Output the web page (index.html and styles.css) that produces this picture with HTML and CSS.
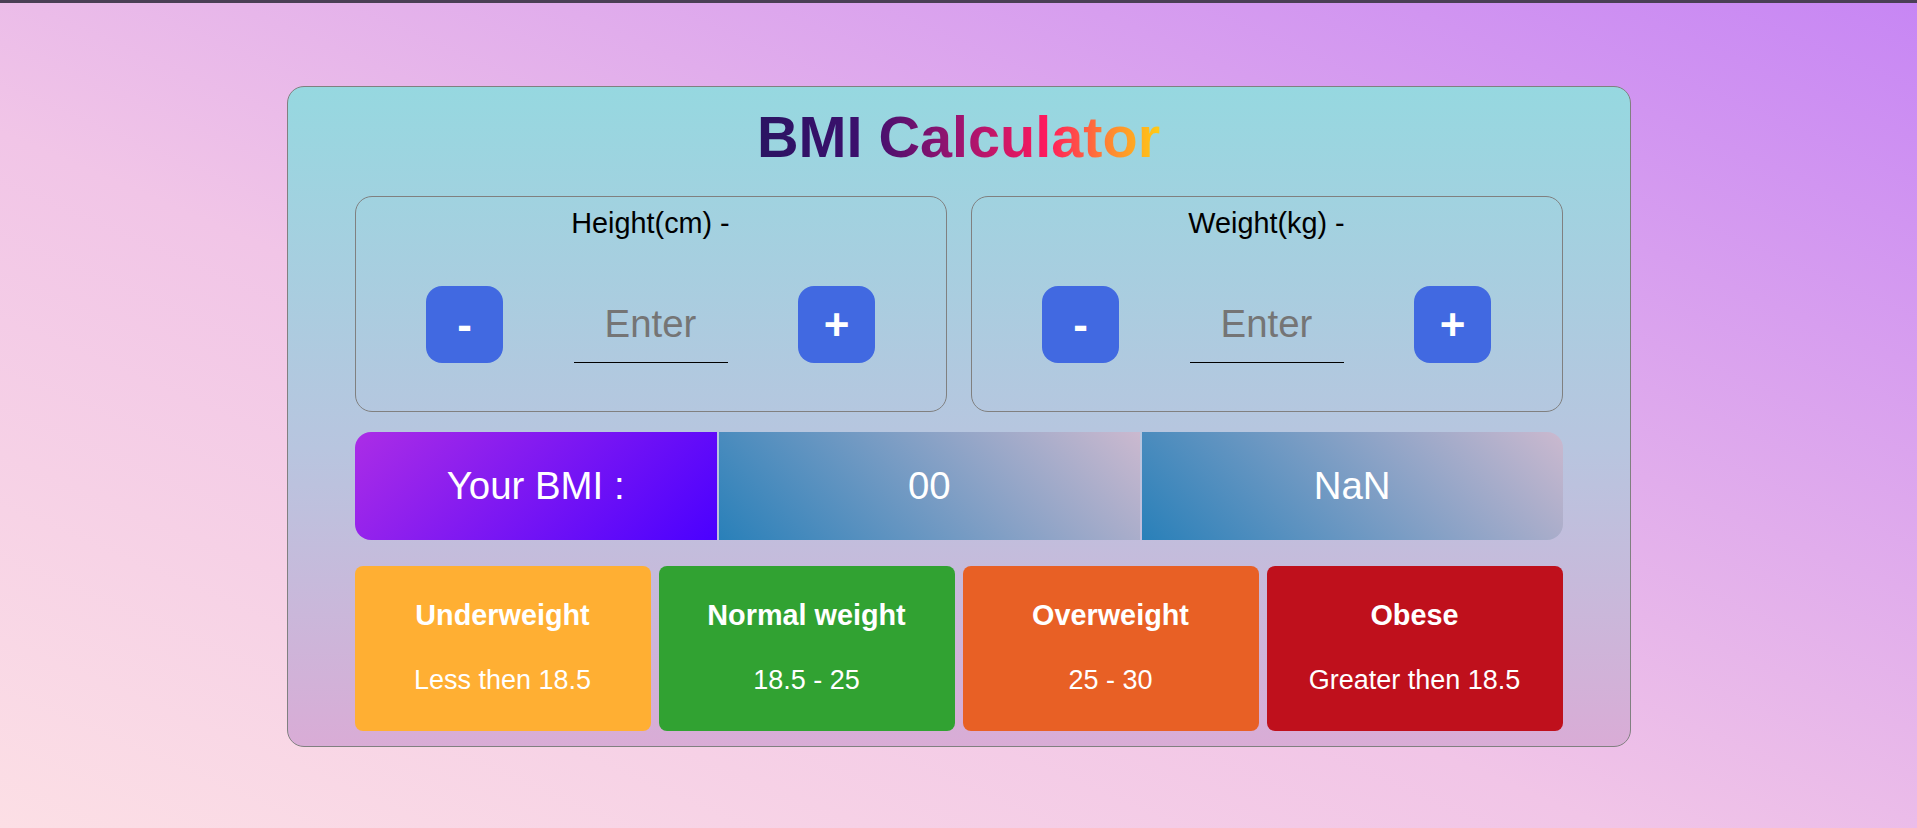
FILE: index.html
```html
<!DOCTYPE html>
<html lang="en">
<head>
<meta charset="UTF-8">
<title>BMI Calculator</title>
<link rel="stylesheet" href="styles.css">
</head>
<body>
<div class="topbar"></div>
<main class="page">
  <section class="card">
    <h1 class="title">BMI Calculator</h1>
    <div class="inputs">
      <div class="field">
        <label class="field-label">Height(cm) -</label>
        <div class="stepper">
          <button class="btn">-</button>
          <input class="num" type="text" placeholder="Enter">
          <button class="btn">+</button>
        </div>
      </div>
      <div class="field">
        <label class="field-label">Weight(kg) -</label>
        <div class="stepper">
          <button class="btn">-</button>
          <input class="num" type="text" placeholder="Enter">
          <button class="btn">+</button>
        </div>
      </div>
    </div>
    <div class="result">
      <div class="res res-label">Your BMI :</div>
      <div class="res res-value">00</div>
      <div class="res res-value res-last">NaN</div>
    </div>
    <div class="cats">
      <div class="cat cat-under"><h3 class="cat-title">Underweight</h3><p class="cat-range">Less then 18.5</p></div>
      <div class="cat cat-normal"><h3 class="cat-title">Normal weight</h3><p class="cat-range">18.5 - 25</p></div>
      <div class="cat cat-over"><h3 class="cat-title">Overweight</h3><p class="cat-range">25 - 30</p></div>
      <div class="cat cat-obese"><h3 class="cat-title">Obese</h3><p class="cat-range">Greater then 18.5</p></div>
    </div>
  </section>
</main>
</body>
</html>
```

FILE: styles.css
```css
* { box-sizing: border-box; }
html, body { height: 100%; }
body {
  margin: 0;
  font-family: "Liberation Sans", Arial, sans-serif;
  background: linear-gradient(to top right, #fcdfe5 0%, #f1c5e7 42%, #c786f4 100%);
  overflow: hidden;
}
.topbar {
  height: 3px;
  background: #4a3f55;
}
.page {
  padding-top: 83px;
}
.card {
  width: 1344px;
  margin: 0 auto;
  padding: 17px 67px 15px;
  border: 1px solid #808080;
  border-radius: 17px;
  background: linear-gradient(to bottom, #96d8e0 0%, #b8c5df 55%, #d9acd6 100%);
  display: flex;
  flex-direction: column;
}
.title {
  margin: 0;
  align-self: center;
  white-space: nowrap;
  text-align: center;
  font-size: 57.6px;
  font-weight: 700;
  line-height: 66px;
  background: linear-gradient(90deg, #2a1462 0%, #3e0f6e 28%, #9d1470 50%, #ff1a5d 72%, #ff8a30 88%, #ffcb14 100%);
  -webkit-background-clip: text;
  background-clip: text;
  color: transparent;
}
.inputs {
  margin-top: 26px;
  display: grid;
  grid-template-columns: 1fr 1fr;
  column-gap: 24px;
}
.field {
  height: 216px;
  border: 1px solid #808080;
  border-radius: 17px;
  padding-top: 10px;
  text-align: center;
}
.field-label {
  display: block;
  font-size: 28.8px;
  line-height: 33px;
  color: #000;
}
.stepper {
  margin-top: 46px;
  display: flex;
  justify-content: space-evenly;
  align-items: center;
}
.btn {
  width: 77px;
  height: 77px;
  border: none;
  border-radius: 16px;
  background: #4169e1;
  color: #fff;
  font-family: "Liberation Sans", Arial, sans-serif;
  font-size: 44px;
  font-weight: 700;
  line-height: 77px;
  padding: 0;
}
.num {
  width: 154px;
  height: 77px;
  border: none;
  border-bottom: 1px solid #000;
  background: transparent;
  font-family: "Liberation Sans", Arial, sans-serif;
  font-size: 38.4px;
  text-align: center;
  padding: 0;
  outline: none;
}
.num::placeholder { color: #757575; }
.result {
  margin-top: 20px;
  height: 108px;
  flex-shrink: 0;
  display: grid;
  grid-template-columns: 30% 1fr 1fr;
  column-gap: 2px;
}
.res {
  display: flex;
  align-items: center;
  justify-content: center;
  color: #fff;
  font-size: 38.4px;
}
.res-label {
  border-radius: 16px 0 0 16px;
  background: linear-gradient(135deg, #ab2de6 0%, #4a00ff 100%);
}
.res-value {
  background: linear-gradient(45deg, #2980b9 0%, #cbb9cf 100%);
}
.res-last {
  border-radius: 0 16px 16px 0;
}
.cats {
  margin-top: 26px;
  display: grid;
  grid-template-columns: repeat(4, 1fr);
  column-gap: 8px;
}
.cat {
  height: 165px;
  border-radius: 8px;
  color: #fff;
  text-align: center;
  padding-top: 32px;
}
.cat-title {
  margin: 0;
  font-size: 28.8px;
  font-weight: 700;
  line-height: 34px;
}
.cat-range {
  margin: 33px 0 0;
  font-size: 27px;
  line-height: 31px;
}
.cat-under { background: #ffaf33; }
.cat-normal { background: #31a232; }
.cat-over { background: #e86025; }
.cat-obese { background: #bf101c; }
```
